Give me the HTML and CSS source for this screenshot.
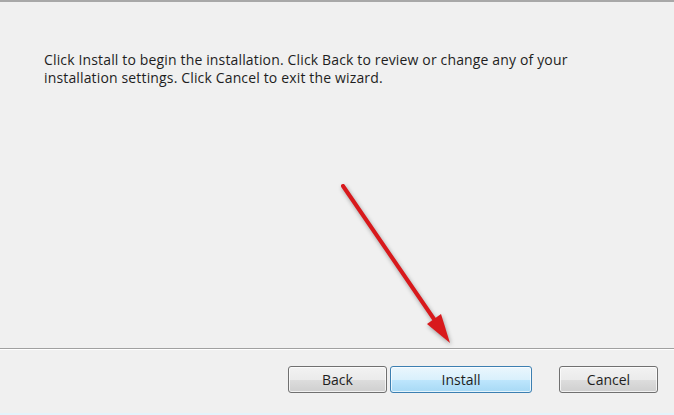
FILE: index.html
```html
<!DOCTYPE html>
<html lang="en">
<head>
	<meta charset="UTF-8">
	<title>Ready to Install</title>
	<link rel="stylesheet" href="styles.css">
</head>
<body>
	<div class="wizard">
		<div class="content">
			<p class="msg">Click Install to begin the installation. Click Back to review or change any of your<br>installation settings. Click Cancel to exit the wizard.</p>
			<svg class="arrow" width="674" height="415" viewBox="0 0 674 415">
				<line x1="343" y1="186" x2="436" y2="322" stroke="#d8191c" stroke-width="4" stroke-linecap="round"/>
				<polygon points="450,343 441,314 427,324" fill="#d8191c"/>
			</svg>
		</div>
		<div class="footer">
			<button class="btn">Back</button>
			<button class="btn btn-main">Install</button>
			<button class="btn btn-cancel">Cancel</button>
		</div>
	</div>
</body>
</html>
```

FILE: styles.css
```css
*{margin: 0;padding: 0;box-sizing: border-box;}
body{background: #f0f0f0;font-family: "Open Sans", "Liberation Sans", sans-serif;color: #1e1e1e;}
.wizard{height: 415px;display: flex;flex-direction: column;border-top: 2px solid #a8a8a8;border-bottom: 2px solid #e4f3fb;}
.content{flex: 1;padding: 49px 0 0 44px;}
.msg{font-size: 14px;line-height: 18px;letter-spacing: 0.15px;white-space: nowrap;}
.arrow{position: absolute;left: 0;top: 0;filter: drop-shadow(1px 2px 2px rgba(0,0,0,.35));pointer-events: none;}
.footer{height: 65px;border-top: 1px solid #a0a0a0;box-shadow: inset 0 1px 0 #fff;display: flex;align-items: flex-start;padding: 17px 16px 0 0;justify-content: flex-end;}
.btn{width: 99px;height: 27px;border: 1px solid #707070;border-radius: 3px;font-family: inherit;font-size: 14px;color: #1e1e1e;background: linear-gradient(#f2f2f2 0%, #ebebeb 50%, #dddddd 51%, #cfcfcf 100%);box-shadow: inset 0 0 0 1px rgba(255,255,255,.7);}
.btn-main{width: 142px;margin-left: 3px;border-color: #3c7fb1;background: linear-gradient(#eaf6fd 0%, #d9f0fc 50%, #bee6fd 51%, #a7d9f5 100%);}
.btn-cancel{margin-left: 27px;}
```
